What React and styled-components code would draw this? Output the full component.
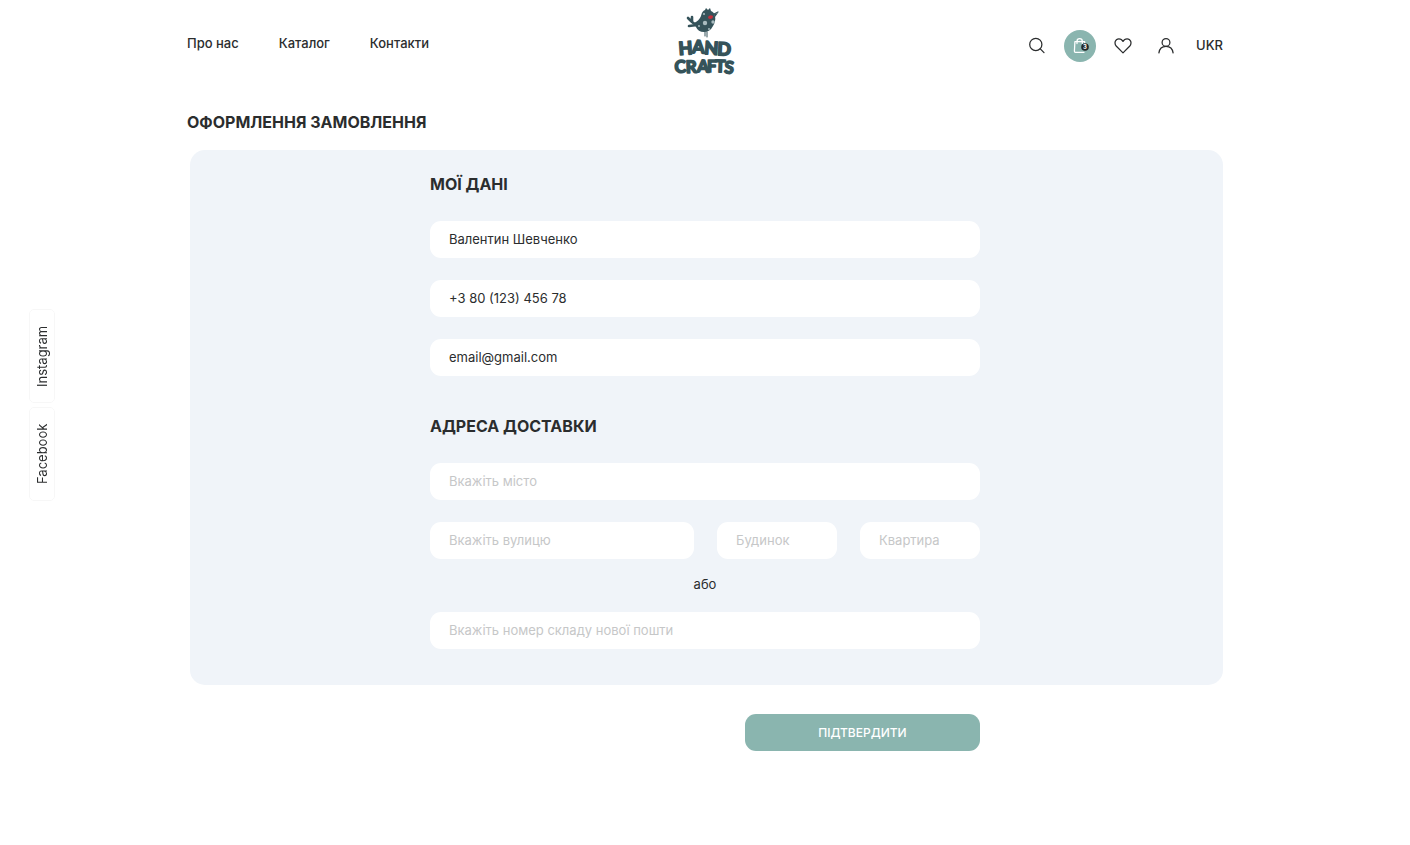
import React from 'react';
import styled, { createGlobalStyle } from 'styled-components';

const GlobalStyle = createGlobalStyle`
  *, *::before, *::after { box-sizing: border-box; }
  body {
    margin: 0;
    background: #fff;
    color: #2b2d2e;
    font-family: Inter, "Liberation Sans", sans-serif;
    font-size: 13px;
    line-height: 20px;
  }
  h1, h2, p { margin: 0; }
  a { color: inherit; text-decoration: none; }
  button, input { font: inherit; color: inherit; }
`;

const Container = styled.div`
  width: 100%;
  max-width: 1076px;
  margin: 0 auto;
  padding: 0 20px;
`;

const Header = styled.header`
  display: grid;
  grid-template-columns: 1fr auto 1fr;
  align-items: center;
  height: 88px;
`;

const Nav = styled.nav`
  display: flex;
  gap: 40px;
  padding-bottom: 2px;
  font-weight: 500;
`;

const LogoLink = styled.a`
  display: block;
  height: 78px;
`;

const Actions = styled.div`
  display: flex;
  align-items: center;
  justify-content: flex-end;
  gap: 11px;
  padding-top: 4px;
`;

const IconButton = styled.button`
  display: grid;
  place-items: center;
  width: 32px;
  height: 32px;
  padding: 0;
  border: 0;
  border-radius: 50%;
  background: ${({ $filled }) => ($filled ? '#8ab5af' : 'transparent')};
  color: ${({ $filled }) => ($filled ? '#fff' : '#2b2d2e')};
  cursor: pointer;

  svg { display: block; }
`;

const LanguageButton = styled.button`
  padding: 0 0 2px;
  margin-left: 3px;
  border: 0;
  background: none;
  font-weight: 500;
  cursor: pointer;
`;

const Title = styled.h1`
  padding-top: 22px;
  font-size: 16px;
  line-height: 24px;
  font-weight: 700;
`;

const Panel = styled.div`
  margin: 16px 0 0 3px;
  padding: 22px 3px 36px 0;
  border-radius: 15px;
  background: #f0f4f9;
`;

const Column = styled.div`
  width: 100%;
  max-width: 550px;
  margin: 0 auto;
`;

const Section = styled.section`
  display: flex;
  flex-direction: column;
  gap: 22px;

  & + & { margin-top: 38px; }
`;

const SectionTitle = styled.h2`
  margin-bottom: 3px;
  font-size: 16px;
  line-height: 24px;
  font-weight: 700;
`;

const Field = styled.input`
  display: block;
  width: 100%;
  min-width: 0;
  height: 37px;
  padding: 0 19px 2px;
  border: 0;
  border-radius: 11px;
  outline: 0;
  background: #fff;

  &::placeholder { color: #c6c7c8; opacity: 1; }
  &:focus-visible { box-shadow: 0 0 0 2px #8ab5af; }
`;

const AddressRow = styled.div`
  display: grid;
  grid-template-columns: 1fr 120px 120px;
  gap: 23px;
`;

const Divider = styled.p`
  margin: -7px 0 -4px;
  text-align: center;
`;

const Footer = styled.div`
  display: flex;
  justify-content: flex-end;
  padding: 29px 0 40px;
`;

const SubmitButton = styled.button`
  width: 235px;
  height: 37px;
  padding: 0;
  border: 0;
  border-radius: 11px;
  background: #8ab5af;
  color: #fff;
  font-size: 12px;
  font-weight: 500;
  cursor: pointer;
`;

const Socials = styled.aside`
  position: fixed;
  top: 309px;
  left: 29px;
  display: flex;
  flex-direction: column;
  gap: 4px;
`;

const SocialLink = styled.a`
  display: grid;
  place-items: center;
  width: 26px;
  height: 94px;
  border: 1px solid #f7f7f7;
  border-radius: 5px;
  writing-mode: vertical-rl;
  transform: rotate(180deg);
`;

function Logo() {
  return (
    <svg width="62" height="78" viewBox="0 0 62 78" role="img" aria-label="Hand Crafts">
      <g fill="#35535a">
        <path d="M20 18 Q25 16 27 11 Q28 6 31 5 L32 3 L34 5 L36 3 L37 6 Q40 7 41 11 Q42 16 39 21 Q36 27 30 27 Q24 27 22 22 Z" />
        <path d="M41 12 L44 8 L40 9 Z" />
      </g>
      <g fill="none" stroke="#35535a" strokeLinecap="round">
        <path d="M22 20 L18 17 L14 13 M18 17 L18 12" strokeWidth="2.6" />
        <path d="M23 20 L15 21" strokeWidth="2.6" />
        <path d="M31 27 V31 M33 27 V32" strokeWidth="1" />
        <path d="M40 9 L44 7" strokeWidth="1.2" />
      </g>
      <g fill="#a9bcc0">
        <circle cx="31" cy="18" r="2.2" />
        <circle cx="39" cy="17" r="1.7" />
        <circle cx="30" cy="9" r="1.1" />
        <circle cx="25" cy="21" r="1" />
        <circle cx="35" cy="24" r="1" />
      </g>
      <path d="M34 12 Q36 9 39 11 Q39 14 36 14 Q34 14 34 12Z" fill="#c52e3c" />
      <text
        fill="#35535a"
        stroke="#35535a"
        strokeWidth="1.7"
        strokeLinejoin="round"
        fontFamily="Lato, sans-serif"
        fontWeight="700"
        fontSize="18"
      >
        <tspan x="5 18 30 43" y="50 48 49 50" rotate="-4 2 4 3">HAND</tspan>
        <tspan x="1 12 23 33 41 50" y="68 68 67 67 67 68" rotate="-4 -2 2 0 2 5" fontSize="17">CRAFTS</tspan>
      </text>
    </svg>
  );
}

const stroke = {
  fill: 'none',
  stroke: 'currentColor',
  strokeWidth: 1.25,
  strokeLinecap: 'round',
  strokeLinejoin: 'round',
  'aria-hidden': true,
};

function SearchIcon() {
  return (
    <svg width="18" height="18" viewBox="0 0 18 18" {...stroke}>
      <circle cx="7.8" cy="7.4" r="6.1" />
      <path d="M12.3 11.9 L16 15.6" />
    </svg>
  );
}

function BagIcon() {
  return (
    <svg width="20" height="20" viewBox="0 0 20 20" {...stroke}>
      <path d="M14 16.3 H5.4 Q4.4 16.3 4.4 15.3 L4.9 5.6 H14.6 L14.9 8.5" />
      <path d="M7 7.6 V5.2 Q7 2.6 9.7 2.6 Q12.3 2.6 12.3 5.2 V7.6" />
      <circle cx="15" cy="11" r="3.8" fill="#222829" stroke="none" />
      <text x="15" y="13" textAnchor="middle" fontSize="6" fontWeight="700" fill="#fff" stroke="none">3</text>
    </svg>
  );
}

function HeartIcon() {
  return (
    <svg width="18" height="18" viewBox="0 0 18 18" {...stroke}>
      <path d="M9 15.9 L2.4 9.3 C-0.4 6 1.5 1.8 4.9 1.8 C7 1.8 8.3 3 9 4.4 C9.7 3 11 1.8 13.1 1.8 C16.5 1.8 18.4 6 15.6 9.3 Z" />
    </svg>
  );
}

function UserIcon() {
  return (
    <svg width="18" height="18" viewBox="0 0 18 18" {...stroke}>
      <circle cx="9" cy="5.4" r="3.9" />
      <path d="M1.9 15.9 C2.4 11.8 5 9.3 9 9.3 C13 9.3 15.6 11.8 16.1 15.9" />
    </svg>
  );
}

export default function App() {
  return (
    <>
      <GlobalStyle />
      <Container>
        <Header>
          <Nav aria-label="Меню">
            <a href="#about">Про нас</a>
            <a href="#catalog">Каталог</a>
            <a href="#contacts">Контакти</a>
          </Nav>
          <LogoLink href="#home">
            <Logo />
          </LogoLink>
          <Actions>
            <IconButton type="button" aria-label="Пошук"><SearchIcon /></IconButton>
            <IconButton type="button" aria-label="Кошик" $filled><BagIcon /></IconButton>
            <IconButton type="button" aria-label="Обране"><HeartIcon /></IconButton>
            <IconButton type="button" aria-label="Профіль"><UserIcon /></IconButton>
            <LanguageButton type="button">UKR</LanguageButton>
          </Actions>
        </Header>
        <main>
          <Title>ОФОРМЛЕННЯ ЗАМОВЛЕННЯ</Title>
          <form onSubmit={(event) => event.preventDefault()}>
            <Panel>
              <Column>
                <Section>
                  <SectionTitle>МОЇ ДАНІ</SectionTitle>
                  <Field type="text" aria-label="Ім'я" defaultValue="Валентин Шевченко" />
                  <Field type="tel" aria-label="Телефон" defaultValue="+3 80 (123) 456 78" />
                  <Field type="email" aria-label="Email" defaultValue="email@gmail.com" />
                </Section>
                <Section>
                  <SectionTitle>АДРЕСА ДОСТАВКИ</SectionTitle>
                  <Field type="text" aria-label="Місто" placeholder="Вкажіть місто" />
                  <AddressRow>
                    <Field type="text" aria-label="Вулиця" placeholder="Вкажіть вулицю" />
                    <Field type="text" aria-label="Будинок" placeholder="Будинок" />
                    <Field type="text" aria-label="Квартира" placeholder="Квартира" />
                  </AddressRow>
                  <Divider>або</Divider>
                  <Field type="text" aria-label="Номер складу" placeholder="Вкажіть номер складу нової пошти" />
                </Section>
              </Column>
            </Panel>
            <Column>
              <Footer>
                <SubmitButton type="submit">ПІДТВЕРДИТИ</SubmitButton>
              </Footer>
            </Column>
          </form>
        </main>
      </Container>
      <Socials aria-label="Соціальні мережі">
        <SocialLink href="#instagram">Instagram</SocialLink>
        <SocialLink href="#facebook">Facebook</SocialLink>
      </Socials>
    </>
  );
}
